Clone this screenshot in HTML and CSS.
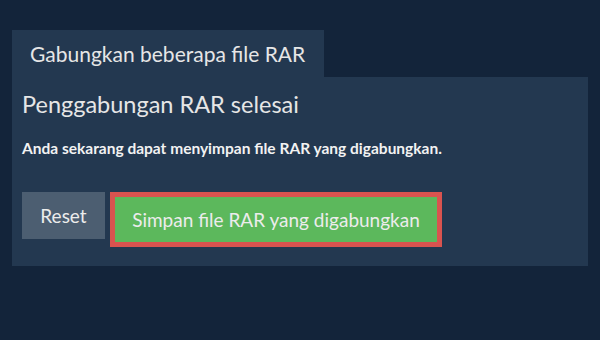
FILE: index.html
```html
<!DOCTYPE html>
<html lang="id">
<head>
<meta charset="utf-8">
<link rel="stylesheet" href="styles.css">
</head>
<body>
<div class="wrap">
  <div class="tab">Gabungkan beberapa file RAR</div>
  <div class="panel">
    <h2 class="title">Penggabungan RAR selesai</h2>
    <p class="msg">Anda sekarang dapat menyimpan file RAR yang digabungkan.</p>
    <div class="actions">
      <button class="btn btn-reset">Reset</button>
      <button class="btn btn-save">Simpan file RAR yang digabungkan</button>
    </div>
  </div>
</div>
</body>
</html>
```
FILE: styles.css
```css
html, body {
  margin: 0;
  padding: 0;
  background: #13243a;
  height: 100%;
}
body {
  font-family: Lato, "Open Sans", sans-serif;
  color: #ececec;
}
.wrap {
  padding: 30px 12px 0 12px;
}
.tab {
  display: inline-block;
  background: #233850;
  font-size: 21px;
  font-weight: normal;
  line-height: 47px;
  height: 47px;
  padding: 0 18px;
  width: 276px;
  color: #e6e6e6;
}
.panel {
  background: #233850;
  padding: 12px 10px 19px 10px;
}
.title {
  margin: 0;
  font-weight: normal;
  font-size: 23.5px;
  line-height: 30px;
  color: #e6e6e6;
}
.msg {
  margin: 18px 0 33px 0;
  font-weight: bold;
  font-size: 15.5px;
  line-height: 22px;
  color: #f2f2f2;
}
.actions {
  display: flex;
  align-items: flex-start;
  gap: 5px;
}
.btn {
  font-family: Lato, "Open Sans", sans-serif;
  font-size: 19px;
  font-weight: normal;
  color: #ececec;
  border: none;
  margin: 0;
  cursor: pointer;
}
.btn-reset {
  background: #4c5e71;
  width: 83px;
  height: 47px;
  padding: 0;
}
.btn-save {
  background: #5cb85c;
  width: 332px;
  height: 55px;
  padding: 0;
  border: 5px solid #d9534f;
}
```
